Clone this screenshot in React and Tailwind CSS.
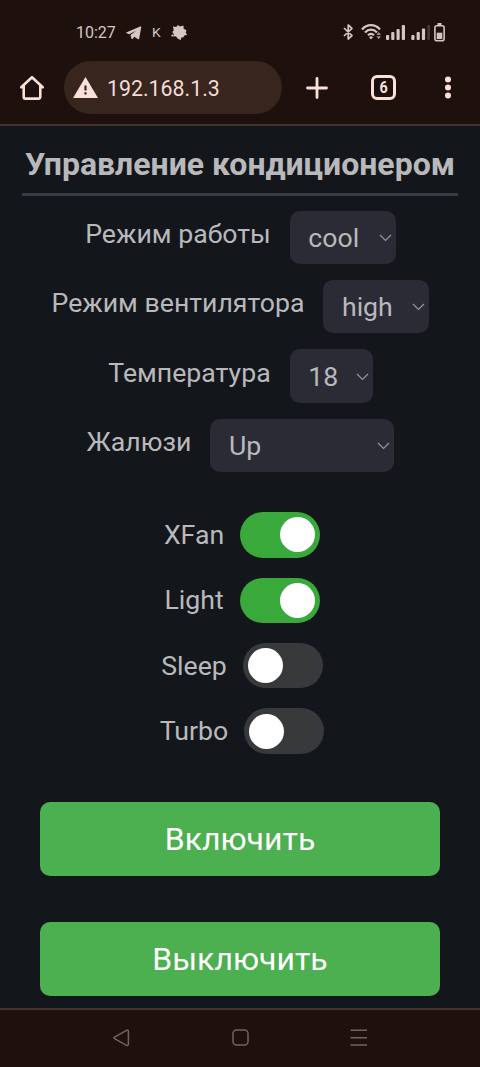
import React, { useState } from 'react';

function StatusBar() {
  return (
    <div className="flex h-[50px] items-center pl-[76px] pt-[14px] text-[#d3c6c3]">
      <span className="w-[50px] pt-[1px] text-[16px] leading-[34px]">10:27</span>
      <svg className="mt-[2px] h-[14px] w-[16px]" viewBox="0 0 16 14" fill="currentColor">
        <path d="M0.700 6.200 14.200 .6c.7-.3 1.200.1 1 1l-2 10.800c-.2.9-.8 1.100-1.500.7L8.300 10.800 6.500 12.900c-.6.400-1 .2-1.100-.4L4.500 9l5.500-4.300-6.800 3.500L.8 7.300c-.8-.3-.8-.8-.1-1.100z" />
      </svg>
      <span className="ml-[10px] mt-[1px] w-[19px] origin-left scale-x-115 text-[12px] leading-[20px]">K</span>
      <svg className="h-[17px] w-[17px]" viewBox="0 0 17 17" fill="currentColor">
        <path d="M2 2.500 5.300 3 6.800 .9 8.900 2.500 12.400 1.600l.3 3.100 2.800 1.600-.8 2.200 1.400 2.300-2.700.7-1.200 2-2 .1-.3 2.500-2.700-1.100-2.200-2.400-2.900-.3.800-2.100L1.200 8l1.500-1.400z" />
        <circle cx="1.300" cy="11.600" r="1" />
      </svg>
      <svg className="ml-[155px] h-[18px] w-[11px]" viewBox="0 0 11 18" fill="none" stroke="currentColor" strokeWidth="1.700" strokeLinejoin="round">
        <path d="M1 5 9 12.700 5.200 16V2L9 5.300 1 13" />
      </svg>
      <svg className="ml-[7px] h-[18px] w-[21px]" viewBox="0 0 21 18" fill="none" stroke="currentColor">
        <path strokeWidth="2.200" d="M1 6.400C6 .8 14 .8 19 6.400M4 9.400c3.500-3.800 8.500-3.800 12 0M7 12.300c1.900-1.900 4.100-1.900 6 0" />
        <path fill="currentColor" stroke="none" d="M8 14.200a3 3 0 0 1 4 0l-2 2.300z" />
        <path fill="currentColor" stroke="none" opacity=".7" d="m17.700 9 2.300 3h-4.600zM15.400 13.200H20l-2.300 3z" />
      </svg>
      <svg className="ml-[3px] h-[18px] w-[46px]" viewBox="0 0 46 18" fill="currentColor">
        <rect x="1" y="12" width="3.200" height="5" rx="1" />
        <rect x="6.200" y="9" width="3.200" height="8" rx="1" />
        <rect x="11.500" y="6" width="3.200" height="11" rx="1" />
        <rect x="16.800" y="2" width="3.200" height="15" rx="1" />
        <rect x="26.300" y="12" width="3.200" height="5" rx="1" />
        <rect x="31.600" y="9" width="3.200" height="8" rx="1" />
        <rect x="36.900" y="5.500" width="3.200" height="11.500" rx="1" />
        <rect x="42.300" y="2" width="2.700" height="15" rx="1" opacity=".22" />
      </svg>
      <svg className="ml-[3px] h-[19px] w-[11px]" viewBox="0 0 11 19">
        <path d="M3.500 1h4" stroke="currentColor" strokeWidth="2" />
        <rect x=".9" y="2.700" width="9.200" height="15" rx="2" fill="none" stroke="currentColor" strokeWidth="1.600" />
        <rect x="2.700" y="9.700" width="5.600" height="6.400" fill="currentColor" />
      </svg>
    </div>
  );
}

function BrowserBar() {
  return (
    <div className="flex h-[76px] items-start border-b-2 border-[#43332f] pt-[11px] text-[#fbdfd9]">
      <svg className="ml-[19px] mt-[13px] h-[28px] w-[26px]" viewBox="0 0 26 28" fill="none" stroke="currentColor" strokeWidth="2.600" strokeLinecap="round" strokeLinejoin="round">
        <path d="M2.300 13.300 13 3.200l10.700 10.100M4.700 12v11a1.600 1.600 0 0 0 1.600 1.600h13.400a1.600 1.600 0 0 0 1.600-1.600V12" />
      </svg>
      <div className="ml-[19px] flex h-[53px] w-[218px] items-center rounded-full bg-[#38251e] pl-[9px]">
        <svg className="-mt-[1px] h-[21px] w-[25px]" viewBox="0 0 25 21">
          <path d="M12.500 0 25 21H0z" fill="currentColor" />
          <path d="M12.500 8.500v5M12.500 15.300v2.300" stroke="#38251e" strokeWidth="2.200" />
        </svg>
        <span className="ml-[9px] mt-[2px] text-[21.330px] leading-[28px] text-[#f3dcd6]">192.168.1.3</span>
      </div>
      <svg className="ml-[23px] mt-[15px] h-[24px] w-[24px]" viewBox="0 0 24 24" stroke="currentColor" strokeWidth="2.800" strokeLinecap="round">
        <path d="M12 2.500v19M2.500 12h19" />
      </svg>
      <div className="ml-[42px] mt-[14px] flex h-[25px] w-[25px] items-center justify-center rounded-[6px] border-[3px] border-[#fbdfd9] text-[16px] leading-none font-bold">
        <span className="scale-x-90">6</span>
      </div>
      <svg className="ml-[48px] mt-[14px] h-[25px] w-[8px]" viewBox="0 0 8 24" fill="currentColor">
        <circle cx="4" cy="4" r="3" />
        <circle cx="4" cy="12" r="3" />
        <circle cx="4" cy="20" r="3" />
      </svg>
    </div>
  );
}

function SelectRow({ label, value, width }) {
  return (
    <div className="flex h-[53.500px] items-start justify-center gap-[19px] pl-[1px]">
      <span className="pt-[7.500px] text-[26.670px] leading-[32px] whitespace-nowrap">{label}</span>
      <button className={`flex h-[53.500px] ${width} items-center justify-between rounded-[10px] bg-[#2b2b36] pt-[1px] pr-[4px] pl-[18.500px] text-[26.670px] leading-[32px]`}>
        <span>{value}</span>
        <svg className="h-[8px] w-[13px]" viewBox="0 0 13 8" fill="none" stroke="#96969a" strokeWidth="1.200">
          <path d="m1 1 5.500 5.500L12 1" />
        </svg>
      </button>
    </div>
  );
}

function ToggleRow({ label, initial }) {
  const [on, setOn] = useState(initial);
  return (
    <div className="flex h-[45.500px] items-center justify-center gap-[16px] pl-[4px]">
      <span className="text-[26.670px] leading-[32px]">{label}</span>
      <button
        role="switch"
        aria-checked={on}
        onClick={() => setOn(!on)}
        className={`flex h-[45.500px] w-[80px] items-center rounded-full px-[5px] ${on ? 'justify-end bg-[#39a93c]' : 'justify-start bg-[#38393b]'}`}
      >
        <span className="h-[35px] w-[35px] rounded-full bg-white" />
      </button>
    </div>
  );
}

function ActionButton({ children }) {
  return (
    <button className="h-[74px] w-[400px] rounded-[10px] bg-[#4caf50] pb-[1px] text-[32px] leading-[40px] text-white">{children}</button>
  );
}

function NavBar() {
  return (
    <div className="flex h-[59px] items-start border-t-2 border-[#43332f] pt-[18px] pl-[112px] text-[#75625f]">
      <svg className="h-[20px] w-[18px]" viewBox="0 0 18 20" fill="none" stroke="currentColor" strokeWidth="1.500" strokeLinejoin="round">
        <path d="M2.600 9.100 14.500 2.300c1-.6 1.900-.1 1.900 1v13c0 1.100-.9 1.600-1.900 1L2.600 10.700c-1-.6-1-1.100 0-1.600z" />
      </svg>
      <svg className="ml-[101px] h-[20px] w-[19px]" viewBox="0 0 19 20" fill="none" stroke="currentColor" strokeWidth="1.500">
        <rect x="2" y="2" width="15" height="15" rx="3.500" />
      </svg>
      <svg className="ml-[100px] h-[20px] w-[18px]" viewBox="0 0 18 20" stroke="currentColor" strokeWidth="1.600">
        <path d="M.5 2.200H17M.5 9.700H17M.5 17H17" />
      </svg>
    </div>
  );
}

export default function App() {
  return (
    <div className="flex h-[1067px] w-[480px] flex-col overflow-hidden bg-[#1e110d] font-[Roboto,sans-serif]">
      <StatusBar />
      <BrowserBar />
      <main className="flex flex-1 flex-col items-center bg-[#13171c] text-[#b9b9bb]">
        <h1 className="flex h-[70px] w-[436px] justify-center border-b-[3px] border-[#3a3c43] pt-[18px] text-[32px] leading-[40px] font-bold whitespace-nowrap">
          Управление кондиционером
        </h1>
        <div className="flex w-full flex-col gap-[15.900px] pt-[14.600px]">
          <SelectRow label="Режим работы" value="cool" width="w-[106px]" />
          <SelectRow label="Режим вентилятора" value="high" width="w-[106px]" />
          <SelectRow label="Температура" value="18" width="w-[83px]" />
          <SelectRow label="Жалюзи" value="Up" width="w-[184px]" />
        </div>
        <div className="flex w-full flex-col gap-[19.900px] pt-[39.900px]">
          <ToggleRow label="XFan" initial={true} />
          <ToggleRow label="Light" initial={true} />
          <ToggleRow label="Sleep" initial={false} />
          <ToggleRow label="Turbo" initial={false} />
        </div>
        <div className="flex flex-col gap-[46px] pt-[48.600px]">
          <ActionButton>Включить</ActionButton>
          <ActionButton>Выключить</ActionButton>
        </div>
      </main>
      <NavBar />
    </div>
  );
}
